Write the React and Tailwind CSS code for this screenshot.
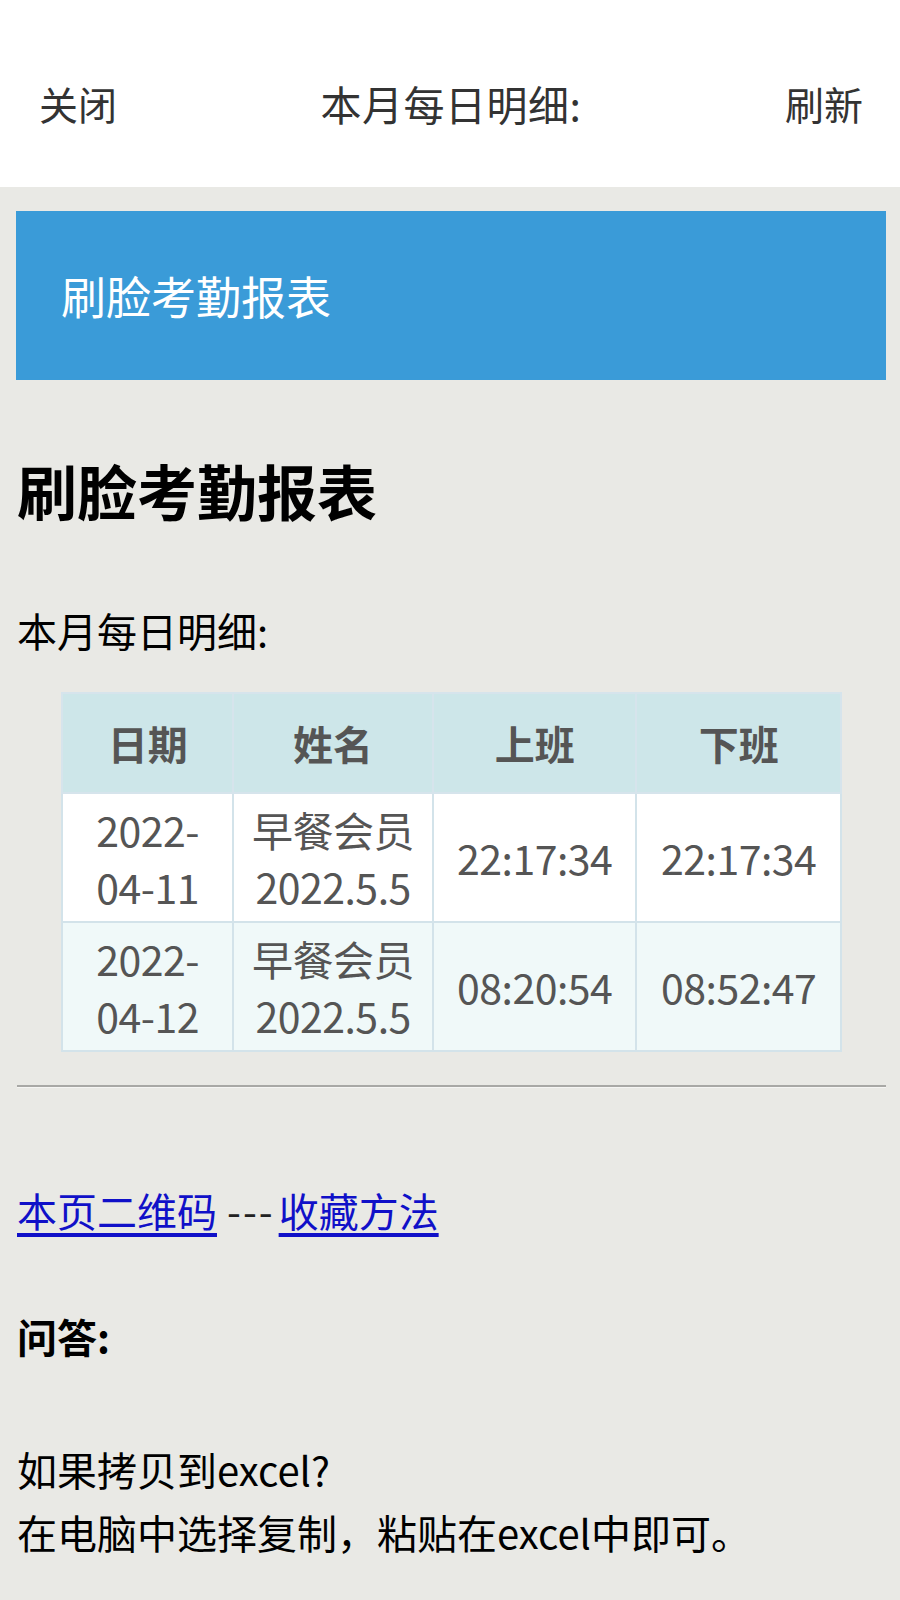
import React from "react";

const rows = [
  { date: ["2022-", "04-11"], name: ["早餐会员", "2022.5.5"], on: "22:17:34", off: "22:17:34", bg: "bg-white" },
  { date: ["2022-", "04-12"], name: ["早餐会员", "2022.5.5"], on: "08:20:54", off: "08:52:47", bg: "bg-[#f0f9f9]" },
];

export default function App() {
  return (
    <div
      className="min-h-[1600px] w-[900px] bg-[#e9e9e5] text-black"
      style={{ fontFamily: '"Noto Sans CJK SC", "Noto Sans", sans-serif' }}
    >
      {/* top bar */}
      <div className="flex h-[187px] items-center justify-between bg-white pl-[39px] pr-[37px] pt-[20px] text-[39px] leading-none text-[#333]">
        <span>关闭</span>
        <span className="text-[41px] tracking-[0.5px]">本月每日明细:</span>
        <span>刷新</span>
      </div>

      <div className="pl-[16px] pr-[14px]">
        {/* banner */}
        <div className="mt-[24px] flex h-[169px] items-center bg-[#3a9bd8] pl-[45px] text-[45px] leading-none text-white">
          刷脸考勤报表
        </div>

        <h1 className="mt-[80px] pl-[1px] text-[60px] font-bold leading-none">刷脸考勤报表</h1>

        <div className="mt-[90px] pl-[1px] text-[40px] leading-none">本月每日明细:</div>

        <table className="ml-[45px] mt-[42px] w-[781px] border-collapse text-center text-[#555]">
          <thead>
            <tr className="h-[100px] bg-[#cde6e9] text-[40px] font-bold">
              <th className="w-[172px] border-2 border-[#d6e4ec]">日期</th>
              <th className="w-[200px] border-2 border-[#d6e4ec]">姓名</th>
              <th className="w-[204px] border-2 border-[#d6e4ec]">上班</th>
              <th className="w-[205px] border-2 border-[#d6e4ec]">下班</th>
            </tr>
          </thead>
          <tbody>
            {rows.map((r, i) => (
              <tr key={i} className={`h-[129px] text-[41px] leading-[57px] ${r.bg}`}>
                <td className="border-2 border-[#d3e3ea] tracking-[-0.5px]">
                  {r.date[0]}
                  <br />
                  {r.date[1]}
                </td>
                <td className="border-2 border-[#d3e3ea] tracking-[-0.5px]">
                  {r.name[0]}
                  <br />
                  {r.name[1]}
                </td>
                <td className="border-2 border-[#d3e3ea] tracking-[-0.5px]">{r.on}</td>
                <td className="border-2 border-[#d3e3ea] tracking-[-0.5px]">{r.off}</td>
              </tr>
            ))}
          </tbody>
        </table>

        <div className="mt-[33px] ml-[1px] h-[3px] border-t-2 border-[#a8a8a5] border-b border-b-[#f5f5f3]" />

        <div className="mt-[102px] pl-[1px] text-[40px] leading-none">
          <a href="#" className="text-[#1010c8] underline underline-offset-[6px]">本页二维码</a>
          <span className="ml-[10px] mr-[4px] tracking-[2px] text-[#222]">---</span>
          <a href="#" className="text-[#1010c8] underline underline-offset-[6px]">收藏方法</a>
        </div>

        <div className="mt-[86px] pl-[1px] text-[40px] font-bold leading-none">问答:</div>

        <div className="mt-[82px] pl-[1px] text-[40px] leading-[63px]">
          <div>如果拷贝到excel?</div>
          <div>在电脑中选择复制，粘贴在excel中即可。</div>
        </div>
      </div>
    </div>
  );
}
